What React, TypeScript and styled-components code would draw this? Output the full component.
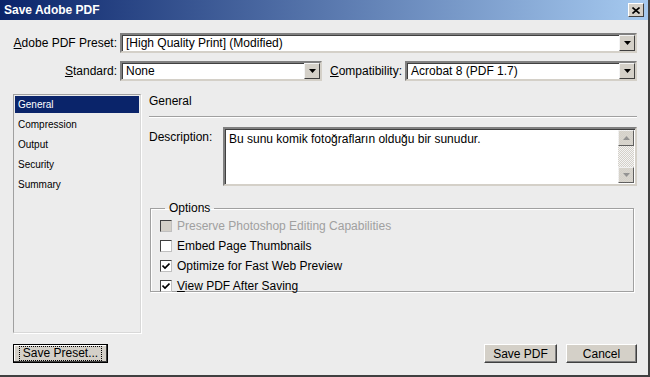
import React from 'react';
import styled, { createGlobalStyle } from 'styled-components';

const GlobalStyle = createGlobalStyle`
  body {
    margin: 0;
    background: #ececec;
    font-family: "Liberation Sans", Arial, sans-serif;
  }
`;

const Window = styled.div`
  width: 650px;
  height: 377px;
  box-sizing: border-box;
  background: #ececec;
  border-right: 2px solid #404040;
  border-bottom: 2px solid #404040;
  display: flex;
  flex-direction: column;
  overflow: hidden;
  font-size: 12px;
  color: #000;
`;

const TitleBar = styled.div`
  height: 20px;
  flex: none;
  display: flex;
  align-items: center;
  padding: 0 4px;
  background: linear-gradient(to right, #0a246a 0%, #a6caf0 100%);
`;

const Title = styled.span`
  flex: 1;
  color: #fff;
  font-weight: bold;
  font-size: 12px;
`;

const CloseButton = styled.div`
  width: 16px;
  height: 14px;
  box-sizing: border-box;
  background: #d4d0c8;
  border: 1px solid;
  border-color: #fff #404040 #404040 #fff;
  display: flex;
  align-items: center;
  justify-content: center;
`;

const Content = styled.div`
  flex: 1;
  display: flex;
  flex-direction: column;
  padding: 13px 11px 0 13px;
`;

const Row = styled.div<{ $top?: number }>`
  display: flex;
  align-items: center;
  height: 20px;
  margin-top: ${(p) => p.$top ?? 0}px;
`;

const Label = styled.span<{ $width?: number; $lead?: number }>`
  box-sizing: border-box;
  width: ${(p) => (p.$width ? `${p.$width}px` : 'auto')};
  text-align: right;
  padding-right: 3px;
  padding-left: ${(p) => p.$lead ?? 0}px;
  white-space: nowrap;
  flex: none;
`;

const Key = styled.span`
  text-decoration: underline;
`;

const SelectBox = styled.div<{ $width?: number }>`
  box-sizing: border-box;
  height: 20px;
  ${(p) => (p.$width ? `width: ${p.$width}px; flex: none;` : 'flex: 1;')}
  background: #fff;
  border: 2px solid;
  border-color: #808080 #d4d0c8 #d4d0c8 #808080;
  box-shadow: inset 1px 1px 0 #404040;
  display: flex;
  align-items: center;
  padding-left: 4px;
`;

const SelectText = styled.span`
  flex: 1;
  white-space: nowrap;
`;

const ArrowButton = styled.div`
  width: 16px;
  height: 16px;
  box-sizing: border-box;
  background: #d4d0c8;
  border: 1px solid;
  border-color: #f4f4f4 #404040 #404040 #f4f4f4;
  display: flex;
  align-items: center;
  justify-content: center;
  flex: none;
`;

const Main = styled.div`
  display: flex;
  margin-top: 13px;
  height: 239px;
`;

const List = styled.div`
  width: 128px;
  box-sizing: border-box;
  background: #ececec;
  border: 1px solid #a0a0a0;
  border-right-color: #d8d8d8;
  border-bottom-color: #d8d8d8;
  box-shadow: 1px 1px 0 #fff;
  padding: 1px 1px;
  font-size: 10px;
  flex: none;
`;

const ListItem = styled.div<{ $selected?: boolean }>`
  height: 17px;
  line-height: 17px;
  padding-left: 3px;
  margin-bottom: 3px;
  background: ${(p) => (p.$selected ? '#0a246a' : 'transparent')};
  color: ${(p) => (p.$selected ? '#fff' : '#000')};
`;

const Panel = styled.div`
  flex: 1;
  margin-left: 8px;
  display: flex;
  flex-direction: column;
`;

const Heading = styled.div`
  height: 22px;
  line-height: 15px;
  border-bottom: 1px solid #a0a0a0;
  box-shadow: 0 1px 0 #fff;
`;

const DescRow = styled.div`
  display: flex;
  margin-top: 10px;
`;

const DescLabel = styled.span`
  width: 74px;
  flex: none;
  padding-top: 3px;
`;

const TextArea = styled.div`
  flex: 1;
  height: 59px;
  box-sizing: border-box;
  background: #fff;
  border: 2px solid;
  border-color: #808080 #d4d0c8 #d4d0c8 #808080;
  box-shadow: inset 1px 1px 0 #404040;
  display: flex;
`;

const TextBody = styled.div`
  flex: 1;
  padding: 3px 4px;
`;

const ScrollBar = styled.div`
  width: 16px;
  display: flex;
  flex-direction: column;
  margin: 1px 1px 1px 0;
  background-color: #e8e8e8;
  background-image: repeating-conic-gradient(#d4d0c8 0 25%, #f4f4f4 0 50%);
  background-size: 2px 2px;
`;

const ScrollButton = styled(ArrowButton)`
  opacity: 0.8;
`;

const ScrollTrack = styled.div`
  flex: 1;
`;

const Group = styled.fieldset`
  margin: 15px 3px 0 1px;
  padding: 4px 9px 7px 9px;
  border: 1px solid #a0a0a0;
  box-shadow: 1px 1px 0 #fff, inset 1px 1px 0 #fff;
  height: 91px;
  box-sizing: border-box;
  display: flex;
  flex-direction: column;
  gap: 7px;
`;

const Legend = styled.legend`
  padding: 0 4px;
  margin-left: 5px;
`;

const CheckRow = styled.div<{ $disabled?: boolean }>`
  display: flex;
  align-items: center;
  height: 13px;
  color: ${(p) => (p.$disabled ? '#a0a0a0' : '#000')};
`;

const CheckBox = styled.div<{ $disabled?: boolean }>`
  width: 12px;
  height: 12px;
  box-sizing: border-box;
  border: 1px solid;
  border-color: #404040 #c0c0c0 #c0c0c0 #404040;
  background: ${(p) => (p.$disabled ? '#d4d0c8' : '#fff')};
  margin-right: 5px;
  display: flex;
  align-items: center;
  justify-content: center;
  flex: none;
`;

const Footer = styled.div`
  display: flex;
  align-items: center;
  margin-top: 11px;
`;

const Button = styled.div<{ $default?: boolean; $width: number }>`
  width: ${(p) => p.$width}px;
  height: 19px;
  box-sizing: border-box;
  background: #d4d0c8;
  border: 1px solid;
  border-color: ${(p) => (p.$default ? '#000' : '#fff #404040 #404040 #fff')};
  box-shadow: ${(p) => (p.$default ? 'inset -1px -1px 0 #404040, inset 1px 1px 0 #fff' : 'inset -1px -1px 0 #808080')};
  display: flex;
  align-items: center;
  justify-content: center;
  font-size: 12px;
`;

const FocusRing = styled.span`
  outline: 1px dotted #000;
  outline-offset: 0;
  padding: 0 3px;
  line-height: 13px;
`;

const Spacer = styled.div`
  flex: 1;
`;

const Gap = styled.div`
  width: 9px;
`;

function DownArrow() {
  return (
    <svg width="7" height="4" viewBox="0 0 7 4">
      <path d="M0 0H7L3.5 4Z" fill="#000" />
    </svg>
  );
}

function Check() {
  return (
    <svg width="8" height="8" viewBox="0 0 8 8">
      <path d="M0.5 3.5L3 6L7.5 1.5" stroke="#000" strokeWidth="1.6" fill="none" />
    </svg>
  );
}

function Select({ value, width }: { value: string; width?: number }) {
  return (
    <SelectBox $width={width}>
      <SelectText>{value}</SelectText>
      <ArrowButton>
        <DownArrow />
      </ArrowButton>
    </SelectBox>
  );
}

const sections = ['General', 'Compression', 'Output', 'Security', 'Summary'];

const options = [
  { label: 'Preserve Photoshop Editing Capabilities', checked: false, disabled: true },
  { label: 'Embed Page Thumbnails', checked: false },
  { label: 'Optimize for Fast Web Preview', checked: true },
  { label: 'View PDF After Saving', checked: true, key: 'V' },
];

export default function App() {
  return (
    <>
      <GlobalStyle />
      <Window>
        <TitleBar>
          <Title>Save Adobe PDF</Title>
          <CloseButton>
            <svg width="8" height="7" viewBox="0 0 8 7">
              <path d="M0.5 0.5L7.5 6.5M7.5 0.5L0.5 6.5" stroke="#000" strokeWidth="1.6" />
            </svg>
          </CloseButton>
        </TitleBar>
        <Content>
          <Row>
            <Label $width={107}>
              <Key>A</Key>
              dobe PDF Preset:
            </Label>
            <Select value="[High Quality Print] (Modified)" />
          </Row>
          <Row $top={8}>
            <Label $width={107}>
              <Key>S</Key>
              tandard:
            </Label>
            <Select value="None" width={202} />
            <Label $lead={8}>
              <Key>C</Key>
              ompatibility:
            </Label>
            <Select value="Acrobat 8 (PDF 1.7)" />
          </Row>
          <Main>
            <List>
              {sections.map((s, i) => (
                <ListItem key={s} $selected={i === 0}>{s}</ListItem>
              ))}
            </List>
            <Panel>
              <Heading>General</Heading>
              <DescRow>
                <DescLabel>Description:</DescLabel>
                <TextArea>
                  <TextBody>Bu sunu komik fotoğrafların olduğu bir sunudur.</TextBody>
                  <ScrollBar>
                    <ScrollButton>
                      <svg width="7" height="4" viewBox="0 0 7 4">
                        <path d="M0 4H7L3.5 0Z" fill="#808080" />
                      </svg>
                    </ScrollButton>
                    <ScrollTrack />
                    <ScrollButton>
                      <svg width="7" height="4" viewBox="0 0 7 4">
                        <path d="M0 0H7L3.5 4Z" fill="#808080" />
                      </svg>
                    </ScrollButton>
                  </ScrollBar>
                </TextArea>
              </DescRow>
              <Group>
                <Legend>Options</Legend>
                {options.map((o) => (
                  <CheckRow key={o.label} $disabled={o.disabled}>
                    <CheckBox $disabled={o.disabled}>{o.checked && <Check />}</CheckBox>
                    {o.key ? (
                      <span>
                        <Key>{o.key}</Key>
                        {o.label.slice(1)}
                      </span>
                    ) : (
                      <span>{o.label}</span>
                    )}
                  </CheckRow>
                ))}
              </Group>
            </Panel>
          </Main>
          <Footer>
            <Button $default $width={95}>
              <FocusRing>Save Preset...</FocusRing>
            </Button>
            <Spacer />
            <Button $width={73}>Save PDF</Button>
            <Gap />
            <Button $width={71}>Cancel</Button>
          </Footer>
        </Content>
      </Window>
    </>
  );
}
